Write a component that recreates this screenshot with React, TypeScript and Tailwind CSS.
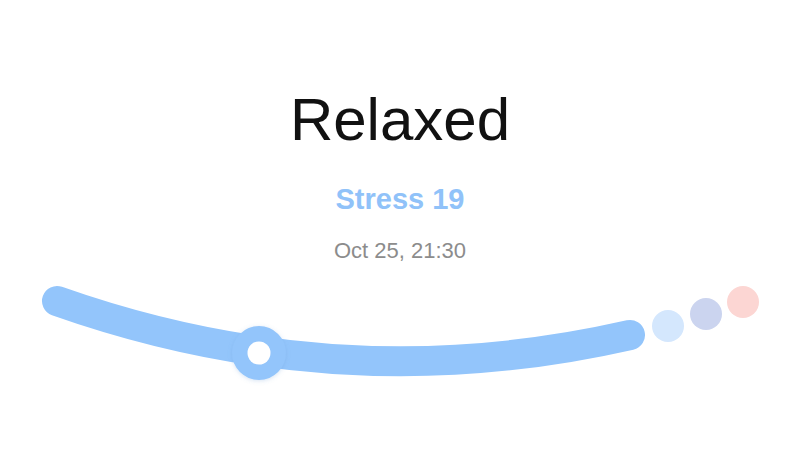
const arc = "M57 300 Q340 400 630 334";

function StressArc() {
  return (
    <svg
      width={800}
      height={140}
      viewBox="0 270 800 140"
      className="block mt-[9px]"
    >
      <defs>
        <filter id="knob-shadow" x="-50%" y="-50%" width="200%" height="200%">
          <feDropShadow dx="0" dy="1" stdDeviation="2" floodColor="#5b8fd0" floodOpacity="0.25" />
        </filter>
      </defs>
      <path d={arc} fill="none" stroke="#93c5fb" strokeWidth={30} strokeLinecap="round" />

      {/* level dots beyond the scale */}
      <circle cx={668} cy={325} r={16} fill="#d4e7fd" />
      <circle cx={706} cy={313} r={16} fill="#cbd4ef" />
      <circle cx={743} cy={301} r={16} fill="#fcd6d3" />

      {/* current position */}
      <g filter="url(#knob-shadow)">
        <circle cx={259} cy={352} r={27} fill="#93c5fb" />
      </g>
      <circle cx={259} cy={352} r={11.5} fill="#ffffff" />
    </svg>
  );
}

export default function App() {
  return (
    <div className="w-[800px] h-[474px] bg-white flex flex-col items-center overflow-hidden font-['Liberation_Sans',Arial,sans-serif]">
      <h1 className="pt-[90px] text-[60px] leading-[60px] font-normal text-[#111111]">
        Relaxed
      </h1>
      <p className="mt-[35px] text-[29px] leading-[29px] font-bold text-[#90c2f9]">
        Stress 19
      </p>
      <p className="mt-[26px] text-[22px] leading-[22px] text-[#8c8c8c]">
        Oct 25, 21:30
      </p>
      <StressArc />
    </div>
  );
}
